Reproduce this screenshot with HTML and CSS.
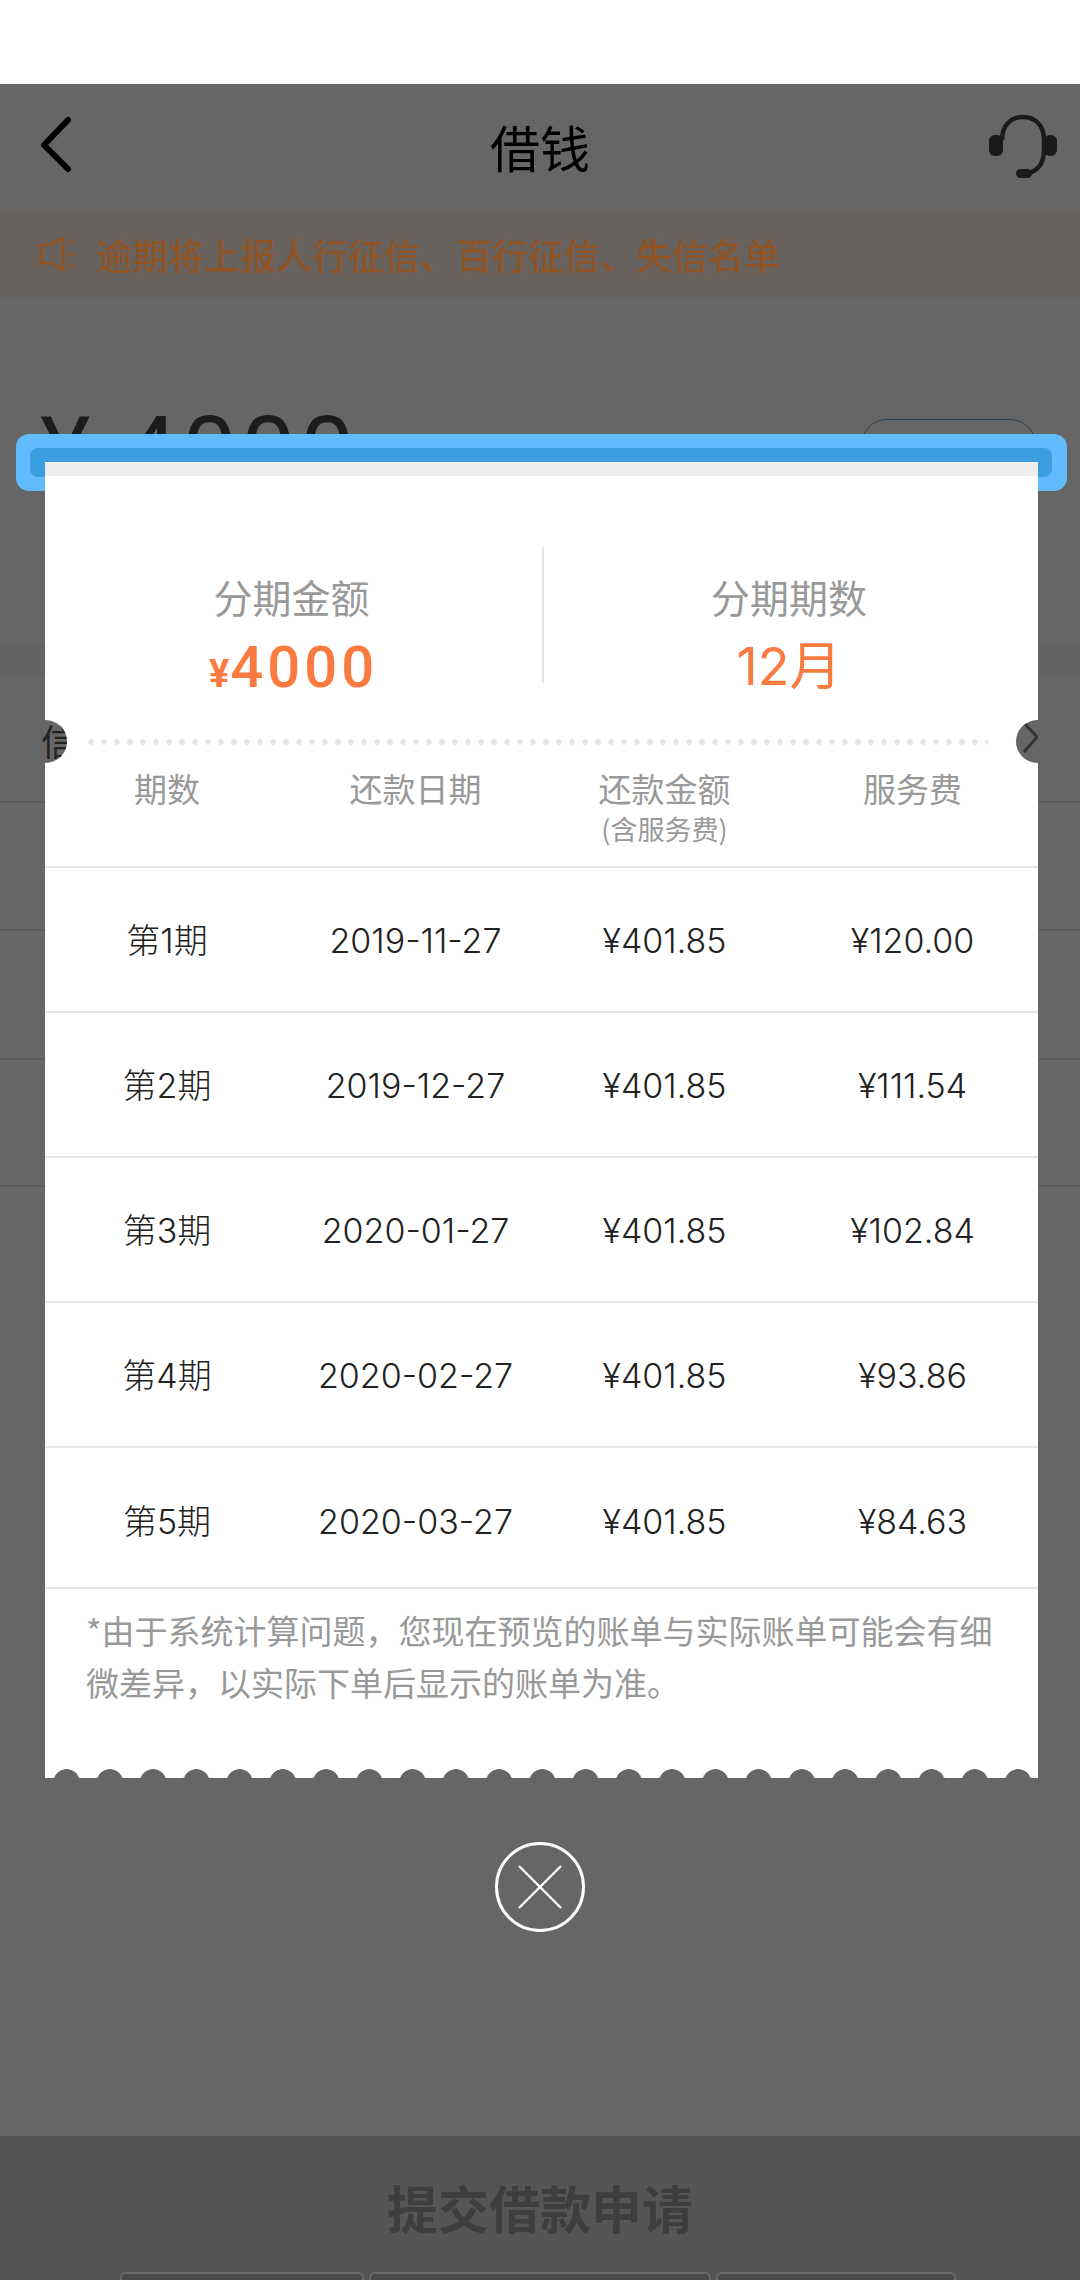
FILE: index.html
```html
<!DOCTYPE html>
<html lang="zh-CN">
<head>
<meta charset="utf-8">
<title>借钱</title>
<link rel="stylesheet" href="styles.css">
</head>
<body>
<div class="screen">
  <div class="status"></div>
  <header class="nav">
    <svg class="nav-back" width="40" height="60" viewBox="0 0 40 60"><path d="M30 5 L6 30 L30 54" fill="none" stroke="#000" stroke-width="6" stroke-linecap="round" stroke-linejoin="round"/></svg>
    <h1 class="nav-title">借钱</h1>
    <svg class="nav-help" width="70" height="70" viewBox="0 0 70 70"><rect x="1" y="21" width="14" height="21" rx="6" fill="#1a1a1a"/><rect x="56" y="21" width="13" height="21" rx="6" fill="#1a1a1a"/><path d="M14 26 C14 10 24 3 35 3 C46 3 56 10 56 26 L56 36 C56 50 50 57 38 60" fill="none" stroke="#1a1a1a" stroke-width="4.5"/><rect x="28" y="55" width="16" height="9" rx="4.5" fill="#1a1a1a"/></svg>
  </header>
  <div class="notice">
    <svg class="notice-icon" width="38" height="36" viewBox="0 0 38 36"><path d="M2 9 H11 L24 2 V34 L11 27 H2 Z" fill="none" stroke="#8f5426" stroke-width="3" stroke-linejoin="round"/><path d="M30 7 L35 4 M30 18 H36 M30 28 L35 32" fill="none" stroke="#8f5426" stroke-width="2.6"/></svg>
    <span>逾期将上报人行征信、百行征信、失信名单</span>
  </div>
  <section class="amount">
    <div class="amount-value"><span class="amount-sign">¥</span><span>4000</span></div>
    <div class="amount-btn"></div>
  </section>
  <div class="gap"></div>
  <div class="bg-row"></div>
  <div class="bg-row"></div>
  <div class="bg-row bg-row-tall"></div>
  <div class="bg-row bg-row-short"></div>
  <footer class="foot">
    <div class="foot-title">提交借款申请</div>
    <div class="foot-tabs">
      <div class="foot-tab foot-tab-a"></div>
      <div class="foot-tab foot-tab-b"></div>
      <div class="foot-tab foot-tab-c"></div>
    </div>
  </footer>
</div>

<div class="modal">
  <div class="roller"><div class="slot"></div></div>
  <div class="paper">
    <div class="paper-shade"></div>
    <div class="summary">
      <div class="summary-cell">
        <div class="summary-label">分期金额</div>
        <div class="summary-value"><span class="yen">¥</span><span class="money">4000</span></div>
      </div>
      <div class="summary-cell summary-cell-right">
        <div class="summary-label">分期期数</div>
        <div class="summary-value">12月</div>
      </div>
    </div>
    <div class="tear">
      <div class="notch notch-left"><span class="notch-char">信</span></div>
      <div class="dots"></div>
      <div class="notch notch-right"><svg width="26" height="36" viewBox="0 0 26 36"><path d="M7 3 L20 17 L7 32" fill="none" stroke="#333" stroke-width="3"/></svg></div>
    </div>
    <div class="table-head">
      <div class="th">期数</div>
      <div class="th">还款日期</div>
      <div class="th">还款金额<small class="th-sub">(含服务费)</small></div>
      <div class="th">服务费</div>
    </div>
    <div class="tr"><div>第1期</div><div>2019-11-27</div><div>¥401.85</div><div>¥120.00</div></div>
    <div class="tr"><div>第2期</div><div>2019-12-27</div><div>¥401.85</div><div>¥111.54</div></div>
    <div class="tr"><div>第3期</div><div>2020-01-27</div><div>¥401.85</div><div>¥102.84</div></div>
    <div class="tr"><div>第4期</div><div>2020-02-27</div><div>¥401.85</div><div>¥93.86</div></div>
    <div class="tr tr-last"><div>第5期</div><div>2020-03-27</div><div>¥401.85</div><div>¥84.63</div></div>
    <p class="note">*由于系统计算问题，您现在预览的账单与实际账单可能会有细微差异，以实际下单后显示的账单为准。</p>
    <div class="scallop"></div>
  </div>
  <svg class="close" width="90" height="90" viewBox="0 0 90 90"><circle cx="45" cy="45" r="43.5" fill="none" stroke="#fff" stroke-width="3"/><path d="M24 24 L66 66 M66 24 L24 66" stroke="#fff" stroke-width="2.4" fill="none"/></svg>
</div>
</body>
</html>
```

FILE: styles.css
```css
* { box-sizing: border-box; }
html, body { margin: 0; padding: 0; }
body {
  width: 1080px;
  height: 2280px;
  overflow: hidden;
  position: relative;
  background: #666;
  font-family: Inter, "Noto Sans CJK SC", sans-serif;
}
.screen { height: 2280px; display: flex; flex-direction: column; background: #666; }
.status { height: 84px; background: #fff; }
.nav {
  height: 126px;
  display: flex;
  align-items: center;
  justify-content: space-between;
  padding: 0 22px 0 38px;
  position: relative;
}
.nav-title {
  position: absolute;
  left: 0;
  right: 0;
  top: 29px;
  margin: 0;
  text-align: center;
  font: 400 50px/66px "Noto Sans CJK SC", sans-serif;
  color: #000;
}
.nav-back { margin-bottom: 4px; }
.nav-help { margin-top: 4px; }
.notice {
  height: 88px;
  background: #68625e;
  display: flex;
  align-items: center;
  gap: 19px;
  padding: 0 0 0 39px;
  color: #8f5426;
  font: 500 36px/48px "Noto Sans CJK SC", sans-serif;
}
.notice-icon { flex: none; }
.amount {
  height: 346px;
  padding: 91px 44px 0 40px;
  display: flex;
  justify-content: space-between;
  align-items: flex-start;
}
.amount-value {
  display: flex;
  gap: 28px;
  font: 400 96px/90px Roboto, sans-serif;
  letter-spacing: 5px;
  color: #1c1c1c;
  padding-top: 18px;
}
.amount-btn {
  width: 175px;
  height: 70px;
  margin-top: 30px;
  border: 1.5px solid #2d3d50;
  border-radius: 26px;
}
.gap { height: 31px; background: #636363; }
.bg-row { height: 128px; border-bottom: 2px solid #5b5b5b; }
.bg-row-tall { height: 129px; }
.bg-row-short { height: 127px; }
.foot {
  margin-top: auto;
  height: 144px;
  background: #555;
  display: flex;
  flex-direction: column;
  align-items: center;
  overflow: hidden;
}
.foot-title {
  margin-top: 37px;
  height: 68px;
  font: 700 51px/68px "Noto Sans CJK SC", sans-serif;
  color: #3e3e3e;
}
.foot-tabs { margin-top: 31px; display: flex; gap: 5px; margin-left: -4px; }
.foot-tab {
  height: 30px;
  background: #4a4a4a;
  border: 2px solid #6a6a6a;
  border-radius: 6px 6px 0 0;
}
.foot-tab-a { width: 244px; }
.foot-tab-b { width: 342px; }
.foot-tab-c { width: 240px; }

.modal {
  position: absolute;
  left: 16px;
  top: 434px;
  width: 1051px;
  display: flex;
  flex-direction: column;
}
.roller {
  height: 57px;
  padding: 14px 15px 0 14px;
  background: #62bbfc;
  border-radius: 13px;
}
.slot { height: 29px; background: #3a9ee0; border-radius: 8px; }
.paper {
  position: relative;
  width: 993px;
  margin: -29px 0 0 29px;
  background: #fff;
  display: flex;
  flex-direction: column;
}
.paper-shade { height: 14px; background: #eee; }
.summary {
  display: grid;
  grid-template-columns: 497px 1fr;
  grid-template-rows: 136px;
  margin: 71px 0 37px;
}
.summary-cell { text-align: center; padding: 24px 4px 0 0; }
.summary-cell-right { border-left: 2px solid #e6e6e6; }
.summary-label { font: 400 39px/50px "Noto Sans CJK SC", sans-serif; color: #999; }
.summary-value {
  margin-top: 11px;
  display: flex;
  justify-content: center;
  align-items: baseline;
  font: 400 52px/70px Inter, "Noto Sans CJK SC", sans-serif;
  color: #fb7a3f;
}
.yen { font: 700 38px/70px Roboto, sans-serif; margin-right: 1px; margin-left: 4px; }
.money { font: 500 58px/70px Roboto, sans-serif; letter-spacing: 4px; }
.tear { position: relative; height: 43px; display: flex; align-items: center; justify-content: center; }
.dots {
  width: 900px;
  height: 6px;
  margin-left: -8px;
  background: radial-gradient(circle at 3px 3px, #e4e4e4 2.6px, transparent 3px) 0 0 / 13px 6px repeat-x;
}
.notch { position: absolute; top: 0; height: 43px; background: #666; overflow: hidden; }
.notch-left { left: -5px; width: 27px; border-radius: 0 22px 22px 0; }
.notch-right { right: 0; width: 22px; border-radius: 22px 0 0 22px; }
.notch-right svg { display: block; margin: 0 0 0 1px; }
.notch-char { display: block; font: 400 36px/42px "Noto Sans CJK SC", sans-serif; color: #222; margin-top: -1px; margin-left: 1px; }
.table-head, .tr {
  display: grid;
  grid-template-columns: 244px 253px 245px 251px;
  text-align: center;
  border-bottom: 2px solid #e6e6e6;
}
.table-head {
  height: 105px;
  padding-top: 4px;
  color: #999;
  font: 400 33px/42px "Noto Sans CJK SC", sans-serif;
}
.th-sub { display: block; margin-top: 2px; font-size: 27px; line-height: 36px; }
.tr {
  height: 145px;
  padding-top: 2px;
  align-items: center;
  font: 300 34px/40px Inter, "Noto Sans CJK SC", sans-serif;
  color: #222;
}
.tr-last { height: 141px; padding-top: 8px; }
.note {
  margin: 0;
  padding: 15px 38px 61px 41px;
  font: 400 33px/52px "Noto Sans CJK SC", sans-serif;
  color: #999;
}
.scallop {
  height: 9px;
  background: radial-gradient(circle at 21.6px 13.5px, #666 13px, transparent 13.6px) 0 0 / 43.25px 9px repeat-x;
}
.close { margin: 64px 0 0 479px; }
```
